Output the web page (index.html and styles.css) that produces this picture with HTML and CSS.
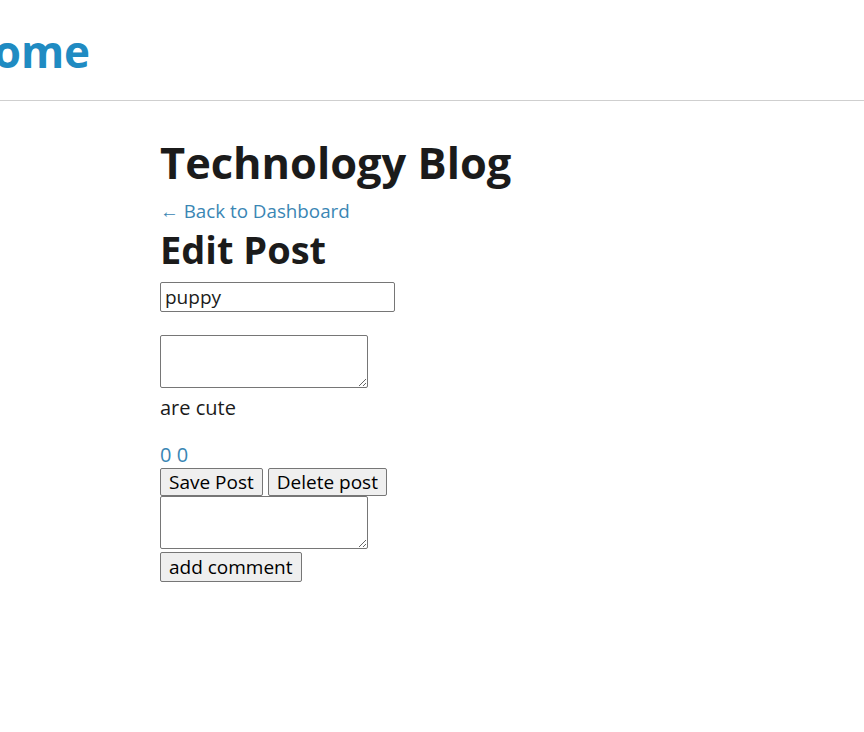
FILE: index.html
```html
<!DOCTYPE html>
<html>
<head>
<meta charset="utf-8">
<link rel="stylesheet" href="styles.css">
</head>
<body>
<header class="topbar">
  <h1 class="brand">Home</h1>
</header>
<main class="page">
  <h1 class="blog-title">Technology Blog</h1>
  <a class="back" href="#">← Back to Dashboard</a>
  <h2 class="edit-title">Edit Post</h2>
  <form class="edit-form">
    <input class="title-input" type="text" value="puppy">
    <textarea class="box"></textarea>
    <p class="body-text">are cute</p>
    <a class="counts" href="#">0 0</a>
    <div class="actions">
      <button type="button" class="btn">Save Post</button>
      <button type="button" class="btn">Delete post</button>
    </div>
    <textarea class="box comment-box"></textarea>
    <button type="button" class="btn btn-comment">add comment</button>
  </form>
</main>
</body>
</html>
```
FILE: styles.css
```css
html, body {
  margin: 0;
  padding: 0;
  background: #fff;
}
body {
  font-family: "Open Sans", "Noto Sans", sans-serif;
  color: #1b1b1b;
  overflow: hidden;
}
.topbar {
  height: 100px;
  box-sizing: content-box;
  border-bottom: 1px solid #cfcfcf;
  padding: 0;
  overflow: hidden;
}
.brand {
  margin: 29px 0 0 -40px;
  font-size: 44px;
  font-weight: 700;
  color: #1f8bc2;
  line-height: 44px;
  white-space: nowrap;
}
.page {
  padding-left: 160px;
  display: flex;
  flex-direction: column;
  align-items: flex-start;
}
.blog-title {
  margin: 34px 0 0;
  font-size: 43.4px;
  line-height: 56px;
  font-weight: 700;
}
.back {
  color: #3a86b4;
  text-decoration: none;
  font-size: 18.8px;
  line-height: 24px;
  margin-top: 8px;
}
.edit-title {
  margin: 1px 0 0;
  font-size: 38px;
  line-height: 50px;
  font-weight: 700;
}
.edit-form {
  display: flex;
  flex-direction: column;
  align-items: flex-start;
  margin-top: 8px;
}
.title-input {
  box-sizing: border-box;
  width: 235px;
  height: 30px;
  border: 1px solid #767676;
  border-radius: 2px;
  padding: 0 4px;
  font-family: inherit;
  font-size: 19px;
  color: #1b1b1b;
}
.box {
  box-sizing: border-box;
  width: 208px;
  height: 53px;
  border: 1px solid #767676;
  border-radius: 2px;
  margin: 23px 0 0;
  padding: 2px;
  font-family: inherit;
}
.body-text {
  margin: 8px 0 0;
  font-size: 20px;
  line-height: 24px;
}
.counts {
  margin-top: 23px;
  color: #3a86b4;
  text-decoration: none;
  font-size: 20px;
  line-height: 24px;
}
.actions {
  display: flex;
  gap: 5px;
  margin-top: 1px;
}
.btn {
  box-sizing: border-box;
  height: 28px;
  font-family: inherit;
  font-size: 19px;
  line-height: 24px;
  padding: 0 8px;
  border: 1px solid #767676;
  border-radius: 2px;
  background: #efefef;
  color: #000;
}
.comment-box {
  margin-top: 0;
}
.btn-comment {
  height: 30px;
  margin-top: 3px;
}
```
